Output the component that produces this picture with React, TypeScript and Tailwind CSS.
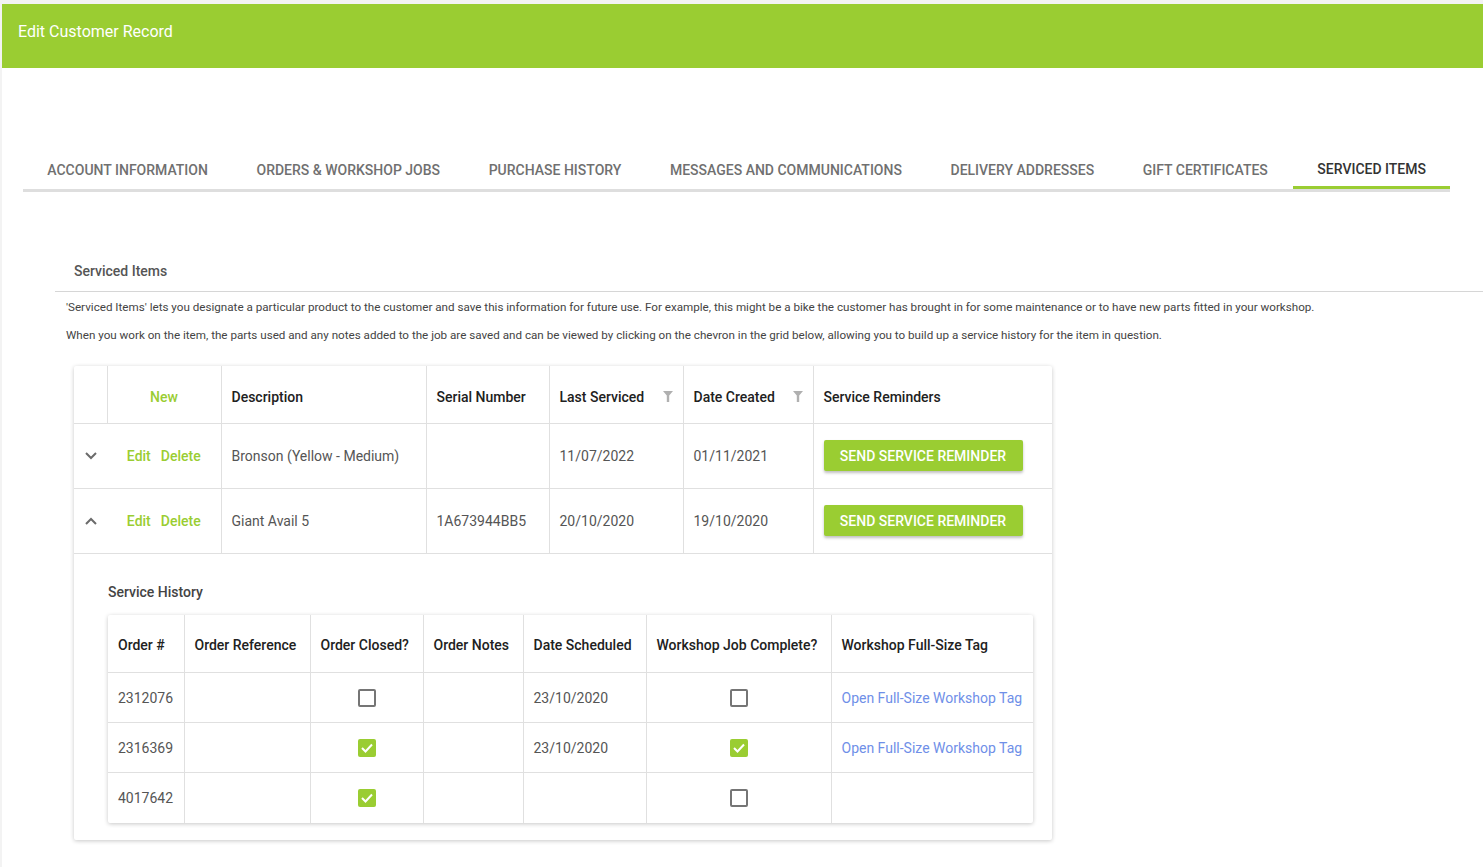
import React from "react";

const tabs = [
  "Account Information",
  "Orders & Workshop Jobs",
  "Purchase History",
  "Messages and Communications",
  "Delivery Addresses",
  "Gift Certificates",
  "Serviced Items",
];

const items = [
  { desc: "Bronson (Yellow - Medium)", serial: "", last: "11/07/2022", created: "01/11/2021", open: false },
  { desc: "Giant Avail 5", serial: "1A673944BB5", last: "20/10/2020", created: "19/10/2020", open: true },
];

const history = [
  { order: "2312076", closed: false, date: "23/10/2020", done: false, tag: true },
  { order: "2316369", closed: true, date: "23/10/2020", done: true, tag: true },
  { order: "4017642", closed: true, date: "", done: false, tag: false },
];

function Funnel() {
  return (
    <svg width="10" height="11" viewBox="0 0 10 11" className="shrink-0">
      <path d="M0 0h10L6.2 4.5V11H3.8V4.5z" fill="#b0b0b0" />
    </svg>
  );
}

function Chevron({ up }: { up: boolean }) {
  return (
    <svg width="12" height="8" viewBox="0 0 12 8">
      <path
        d={up ? "M1 7l5-5 5 5" : "M1 1l5 5 5-5"}
        fill="none"
        stroke="#6b6b6b"
        strokeWidth="2"
      />
    </svg>
  );
}

function Checkbox({ checked }: { checked: boolean }) {
  if (checked) {
    return (
      <span className="inline-flex w-[18px] h-[18px] rounded-[2px] bg-[#9acd32] items-center justify-center">
        <svg width="12" height="10" viewBox="0 0 12 10">
          <path d="M1 5l3.5 3.5L11 1.5" fill="none" stroke="#fff" strokeWidth="2" />
        </svg>
      </span>
    );
  }
  return <span className="inline-block w-[18px] h-[18px] rounded-[2px] border-2 border-[#757575]" />;
}

export default function App() {
  return (
    <div className="min-h-screen bg-[#f3f3f3] pt-[4px] pl-[2px] font-['Roboto',sans-serif]">
      <div className="bg-white min-h-[863px]">
        <div className="h-16 bg-[#9acd32] flex items-center px-4 pb-[9px] text-white text-base">
          Edit Customer Record
        </div>

        <div className="mt-[73px] ml-[21px] w-[1427px] flex border-b-[3px] border-[#dedede]">
          {tabs.map((t, i) => {
            const active = i === tabs.length - 1;
            return (
              <div
                key={t}
                className={
                  active
                    ? "h-12 px-6 pt-[10px] flex items-center shrink-0 whitespace-nowrap uppercase text-sm font-medium text-[#333] border-b-[3px] border-[#9acd32] -mb-[3px] ml-auto"
                    : "h-12 px-[24.3px] pt-[10px] flex items-center shrink-0 whitespace-nowrap uppercase text-sm font-medium text-[#707070]"
                }
              >
                {t}
              </div>
            );
          })}
        </div>

        <div className="mt-[58px] ml-[53px]">
          <div className="h-[42px] flex items-center pl-[19px] border-b border-[#d6d6d6] text-sm font-medium text-[#555]">
            Serviced Items
          </div>
          <p className="pl-[11px] mt-[8px] text-[11.65px] text-[#444] leading-[14px]">
            'Serviced Items' lets you designate a particular product to the customer and save this information for future use. For example, this might be a bike the customer has brought in for some maintenance or to have new parts fitted in your workshop.
          </p>
          <p className="pl-[11px] mt-[14px] text-[11.65px] text-[#444] leading-[14px]">
            When you work on the item, the parts used and any notes added to the job are saved and can be viewed by clicking on the chevron in the grid below, allowing you to build up a service history for the item in question.
          </p>

          <div className="mt-[24px] ml-[19px] w-[978px] bg-white shadow-[0_1px_4px_rgba(0,0,0,0.22)] rounded-[2px]">
            <table className="w-full border-collapse table-fixed text-sm">
              <colgroup>
                <col className="w-[33px]" />
                <col className="w-[114px]" />
                <col className="w-[205px]" />
                <col className="w-[123px]" />
                <col className="w-[134px]" />
                <col className="w-[130px]" />
                <col className="w-[239px]" />
              </colgroup>
              <thead>
                <tr className="h-[57px] text-left text-[#212121] font-medium">
                  <th className="border-r border-[#e0e0e0]" />
                  <th className="border-r border-[#e0e0e0] pt-[5px] text-center font-medium text-[#9acd32]">New</th>
                  <th className="border-r border-[#e0e0e0] pt-[5px] px-[10px] font-medium">Description</th>
                  <th className="border-r border-[#e0e0e0] pt-[5px] px-[10px] font-medium">Serial Number</th>
                  <th className="border-r border-[#e0e0e0] pt-[5px] px-[10px] font-medium">
                    <div className="flex items-center justify-between">
                      Last Serviced <Funnel />
                    </div>
                  </th>
                  <th className="border-r border-[#e0e0e0] pt-[5px] px-[10px] font-medium">
                    <div className="flex items-center justify-between">
                      Date Created <Funnel />
                    </div>
                  </th>
                  <th className="pt-[5px] px-[10px] font-medium">Service Reminders</th>
                </tr>
              </thead>
              <tbody className="text-[#555]">
                {items.map((it) => (
                  <tr key={it.desc} className="h-[65px] border-t border-[#e0e0e0]">
                    <td className="text-center">
                      <div className="flex justify-center">
                        <Chevron up={it.open} />
                      </div>
                    </td>
                    <td className="border-r border-[#e0e0e0] text-center font-medium text-[#9acd32]">
                      Edit<span className="ml-[10px]">Delete</span>
                    </td>
                    <td className="border-r border-[#e0e0e0] px-[10px]">{it.desc}</td>
                    <td className="border-r border-[#e0e0e0] px-[10px]">{it.serial}</td>
                    <td className="border-r border-[#e0e0e0] px-[10px]">{it.last}</td>
                    <td className="border-r border-[#e0e0e0] px-[10px]">{it.created}</td>
                    <td className="px-[10px]">
                      <button className="h-[31px] w-[199px] bg-[#9acd32] text-white uppercase font-medium text-sm rounded-[2px] shadow-[0_2px_3px_rgba(0,0,0,0.25)]">
                        Send Service Reminder
                      </button>
                    </td>
                  </tr>
                ))}
                <tr className="border-t border-[#e0e0e0]">
                  <td colSpan={7} className="pl-[34px] pr-[19px] pt-[28px] pb-[17px]">
                    <div className="text-sm font-medium text-[#444]">Service History</div>
                    <div className="mt-[13px] w-[925px] shadow-[0_1px_4px_rgba(0,0,0,0.22)] rounded-[2px]">
                      <table className="w-full border-collapse table-fixed text-sm">
                        <colgroup>
                          <col className="w-[76px]" />
                          <col className="w-[126px]" />
                          <col className="w-[113px]" />
                          <col className="w-[100px]" />
                          <col className="w-[123px]" />
                          <col className="w-[185px]" />
                          <col className="w-[202px]" />
                        </colgroup>
                        <thead>
                          <tr className="h-[58px] text-left text-[#212121]">
                            <th className="border-r border-[#e0e0e0] pt-[4px] px-[10px] font-medium">Order #</th>
                            <th className="border-r border-[#e0e0e0] pt-[4px] px-[10px] font-medium">Order Reference</th>
                            <th className="border-r border-[#e0e0e0] pt-[4px] px-[10px] font-medium">Order Closed?</th>
                            <th className="border-r border-[#e0e0e0] pt-[4px] px-[10px] font-medium">Order Notes</th>
                            <th className="border-r border-[#e0e0e0] pt-[4px] px-[10px] font-medium">Date Scheduled</th>
                            <th className="border-r border-[#e0e0e0] pt-[4px] px-[10px] font-medium">Workshop Job Complete?</th>
                            <th className="pt-[4px] px-[10px] font-medium">Workshop Full-Size Tag</th>
                          </tr>
                        </thead>
                        <tbody className="text-[#555]">
                          {history.map((h) => (
                            <tr key={h.order} className="h-[50px] border-t border-[#e0e0e0]">
                              <td className="border-r border-[#e0e0e0] px-[10px]">{h.order}</td>
                              <td className="border-r border-[#e0e0e0] px-[10px]" />
                              <td className="border-r border-[#e0e0e0] text-center align-middle">
                                <div className="flex justify-center">
                                  <Checkbox checked={h.closed} />
                                </div>
                              </td>
                              <td className="border-r border-[#e0e0e0] px-[10px]" />
                              <td className="border-r border-[#e0e0e0] px-[10px]">{h.date}</td>
                              <td className="border-r border-[#e0e0e0] text-center">
                                <div className="flex justify-center">
                                  <Checkbox checked={h.done} />
                                </div>
                              </td>
                              <td className="px-[10px] text-[#6f8fe8] whitespace-nowrap">
                                {h.tag ? "Open Full-Size Workshop Tag" : ""}
                              </td>
                            </tr>
                          ))}
                        </tbody>
                      </table>
                    </div>
                  </td>
                </tr>
              </tbody>
            </table>
          </div>
        </div>
      </div>
    </div>
  );
}
